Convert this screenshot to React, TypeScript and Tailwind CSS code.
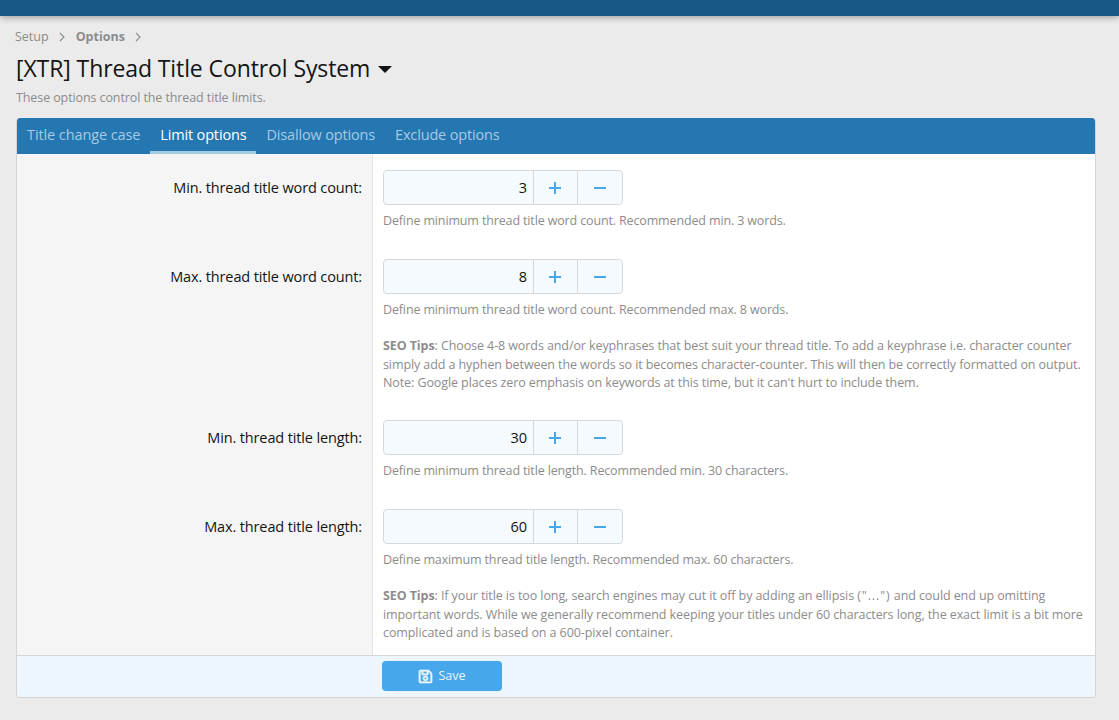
import React from "react";
import { FaRegSave } from "react-icons/fa";

function Chevron() {
  return (
    <svg className="mx-[10.5px]" width="6" height="10" viewBox="0 0 6 10" fill="none">
      <path d="M1 1l4 4-4 4" stroke="#8c8c8c" strokeWidth="1.1" />
    </svg>
  );
}

function Spin({ value }: { value: string }) {
  return (
    <div className="flex h-[35px] w-[240px] rounded-[4px] border border-[#d5d9dc] bg-[#f5faff] text-[14.5px]">
      <div className="flex flex-1 items-center justify-end pr-[6px] text-[#141414]">{value}</div>
      <div className="flex w-[44px] items-center justify-center border-l border-[#d5d9dc] pr-[1px]">
        <svg width="14" height="14" viewBox="0 0 14 14"><path d="M7 1v12M1 7h12" stroke="#47a7eb" strokeWidth="2" /></svg>
      </div>
      <div className="flex w-[45px] items-center justify-center border-l border-[#d5d9dc]">
        <svg width="14" height="14" viewBox="0 0 14 14"><path d="M1 7h12" stroke="#47a7eb" strokeWidth="2" /></svg>
      </div>
    </div>
  );
}

function Row({ label, value, h, note, children }: { label: string; value: string; h: string; note: string; children?: React.ReactNode }) {
  return (
    <div className={`flex ${h}`}>
      <div className="w-[356px] shrink-0 border-r border-[#e4e4e4] bg-[#f5f5f5] pr-[10px] pt-[25px] text-right text-[14.5px] leading-[18px] tracking-[-0.13px] text-[#141414]">
        {label}
      </div>
      <div className="flex-1 bg-white pl-[10px] pt-[16px]">
        <Spin value={value} />
        <div className="mt-[7px] text-[12.5px] leading-[18.2px] tracking-[-0.09px] text-[#8c8c8c]">
          <span className="tracking-[-0.14px]">{note}</span>
          {children}
        </div>
      </div>
    </div>
  );
}

export default function App() {
  return (
    <div className="h-[720px] w-[1119px] overflow-hidden bg-[#ebebeb] font-['Open_Sans',sans-serif]">
      <div className="h-[16px] bg-[#185886] shadow-[0_2px_6px_rgba(0,0,0,0.3)]" />
      <div className="flex items-center pl-[15px] pt-[13px] text-[12.5px] leading-[16px] text-[#8c8c8c]">
        <span>Setup</span>
        <Chevron />
        <b className="font-bold">Options</b>
        <Chevron />
      </div>
      <div className="ml-[16px] mt-[8px] flex items-center text-[23px] leading-[30px] tracking-[-0.1px] text-[#141414]">
        [XTR] Thread Title Control System
        <span className="ml-[8px] mt-[2px] h-0 w-0 border-x-[7px] border-t-[7px] border-x-transparent border-t-[#141414]" />
      </div>
      <div className="ml-[16px] mt-[6px] text-[12.5px] leading-[18px] tracking-[-0.1px] text-[#8c8c8c]">These options control the thread title limits.</div>
      <div className="ml-[16px] mt-[11px] w-[1080px] overflow-hidden rounded-[4px] border border-t-0 border-[#d5d5d5]">
        <div className="flex h-[36px] bg-[#2577b1] text-[14.5px] tracking-[-0.16px] text-[#a5cae4]">
          <div className="px-[10px] pt-[6px] tracking-[-0.1px]">Title change case</div>
          <div className="border-b-[3px] border-[#a5cae4] px-[10px] pt-[6px] text-white">Limit options</div>
          <div className="px-[10px] pt-[6px]">Disallow options</div>
          <div className="px-[10px] pt-[6px]">Exclude options</div>
        </div>
        <Row label="Min. thread title word count:" value="3" h="h-[89px]" note="Define minimum thread title word count. Recommended min. 3 words." />
        <Row label="Max. thread title word count:" value="8" h="h-[161px]" note="Define minimum thread title word count. Recommended max. 8 words.">
          <br /><br />
          <b>SEO Tips</b>: Choose 4-8 words and/or keyphrases that best suit your thread title. To add a keyphrase i.e. character counter
          <br />simply add a hyphen between the words so it becomes character-counter. This will then be correctly formatted on output.
          <br />Note: Google places zero emphasis on keywords at this time, but it can't hurt to include them.
        </Row>
        <Row label="Min. thread title length:" value="30" h="h-[89px]" note="Define minimum thread title length. Recommended min. 30 characters." />
        <Row label="Max. thread title length:" value="60" h="h-[162px]" note="Define maximum thread title length. Recommended max. 60 characters.">
          <br /><br />
          <b>SEO Tips</b>: If your title is too long, search engines may cut it off by adding an ellipsis <span className="tracking-[0.9px]">("...")</span> and could end up omitting
          <br />important words. While we generally recommend keeping your titles under 60 characters long, the exact limit is a bit more
          <br />complicated and is based on a 600-pixel container.
        </Row>
        <div className="flex h-[42px] border-t border-[#d5d5d5] bg-[#edf6fd] pl-[365px] pt-[5px]">
          <button className="flex h-[30px] w-[120px] items-center justify-center gap-[5px] rounded-[4px] bg-[#47a7eb] text-[12.5px] text-[#ebf5fc]">
            <FaRegSave className="h-[15px] w-[15px]" stroke="currentColor" strokeWidth={20} />
            Save
          </button>
        </div>
      </div>
    </div>
  );
}
